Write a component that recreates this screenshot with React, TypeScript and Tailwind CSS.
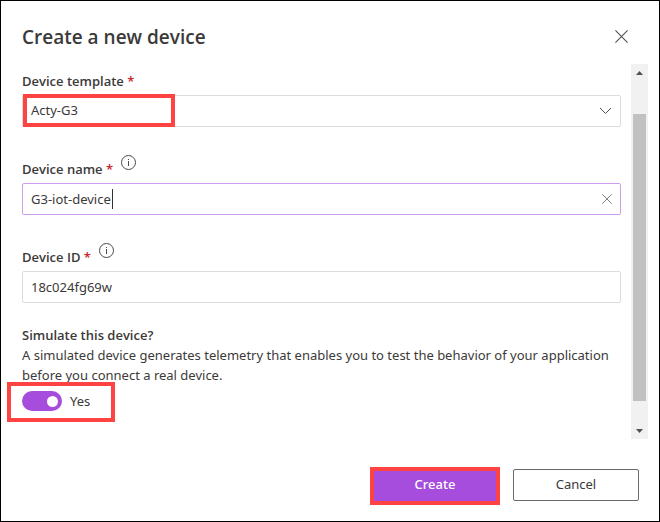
import React, { useState } from "react";

const fieldBox =
  "h-8 w-full rounded-xs border bg-white px-2 text-[13px] text-[#3b3a39] outline-none";

function InfoIcon() {
  return (
    <svg width="16" height="16" viewBox="0 0 16 16" fill="none" stroke="#4a4a4a" aria-hidden="true">
      <circle cx="7.5" cy="7.5" r="7" />
      <path d="M7.5 6V11M7.5 4V5" />
    </svg>
  );
}

function CrossIcon({ size, color }: { size: number; color: string }) {
  return (
    <svg width={size} height={size} viewBox="0 0 12 12" stroke={color} aria-hidden="true">
      <path d="M0.4 0.4L11.6 11.6M11.6 0.4L0.4 11.6" />
    </svg>
  );
}

function FieldLabel({ id, text, info }: { id: string; text: string; info?: boolean }) {
  return (
    <div className="flex h-7 gap-2">
      <label
        htmlFor={id}
        className="font-['Open_Sans','Noto_Sans',sans-serif] text-[13px] leading-7 font-semibold"
      >
        {text} <span className="text-[#c4262e]">*</span>
      </label>
      {info && (
        <button type="button" aria-label={"About " + text} className="h-4">
          <InfoIcon />
        </button>
      )}
    </div>
  );
}

function Scrollbar() {
  return (
    <div className="flex w-[17px] shrink-0 flex-col bg-[#f1f1f1]" aria-hidden="true">
      <div className="flex h-[17px] items-center justify-center">
        <svg width="7" height="4" viewBox="0 0 7 4" fill="#505050">
          <path d="M0 4L3.5 0L7 4Z" />
        </svg>
      </div>
      <div className="flex grow flex-col px-[2px] pt-[33px] pb-[21px]">
        <div className="grow bg-[#c1c1c1]" />
      </div>
      <div className="flex h-[17px] items-center justify-center">
        <svg width="7" height="4" viewBox="0 0 7 4" fill="#505050">
          <path d="M0 0L3.5 4L7 0Z" />
        </svg>
      </div>
    </div>
  );
}

export default function App() {
  const [name, setName] = useState("G3-iot-device");
  const [deviceId, setDeviceId] = useState("18c024fg69w");
  const [simulated, setSimulated] = useState(true);

  return (
    <main
      role="dialog"
      aria-labelledby="dialog-title"
      className="flex min-h-screen flex-col border border-black bg-white font-['Noto_Sans','Open_Sans',sans-serif] text-[#3b3a39]"
    >
      <header className="flex h-[63px] items-center justify-between pt-2 pr-[31px] pl-[21px]">
        <h1
          id="dialog-title"
          className="font-['Open_Sans','Noto_Sans',sans-serif] text-[19px] leading-7 font-semibold"
        >
          Create a new device
        </h1>
        <button type="button" aria-label="Close">
          <CrossIcon size={13} color="#505050" />
        </button>
      </header>

      <div className="flex grow pr-[11px]">
        <form className="min-w-0 grow pt-[3px] pr-[10px] pb-7 pl-[21px]">
          <div className="flex flex-col gap-7">
            <div>
              <FieldLabel id="template" text="Device template" />
              <div className="relative">
                <select id="template" className={fieldBox + " appearance-none border-[#dcdcdc]"}>
                  <option>Acty-G3</option>
                </select>
                <svg
                  className="pointer-events-none absolute top-3 right-[9px]"
                  width="13"
                  height="8"
                  viewBox="0 0 13 8"
                  fill="none"
                  stroke="#505050"
                  aria-hidden="true"
                >
                  <path d="M1 1L6.5 6.5L12 1" />
                </svg>
                <div className="pointer-events-none absolute -top-px left-px h-[33px] w-[152px] border-4 border-[#ff4343]" />
              </div>
            </div>

            <div>
              <FieldLabel id="name" text="Device name" info />
              <div className="relative">
                <input
                  id="name"
                  type="text"
                  value={name}
                  onChange={(e) => setName(e.target.value)}
                  className={fieldBox + " border-[#cf9df0]"}
                />
                <span className="pointer-events-none absolute top-[6px] left-[90px] h-5 w-px bg-[#323130]" />
                <button
                  type="button"
                  aria-label="Clear device name"
                  onClick={() => setName("")}
                  className="absolute top-[11px] right-[9px]"
                >
                  <CrossIcon size={10} color="#666666" />
                </button>
              </div>
            </div>

            <div>
              <FieldLabel id="device-id" text="Device ID" info />
              <input
                id="device-id"
                type="text"
                value={deviceId}
                onChange={(e) => setDeviceId(e.target.value)}
                className={fieldBox + " border-[#dcdcdc]"}
              />
            </div>
          </div>

          <div className="mt-[22px] text-[13px] leading-5">
            <label
              htmlFor="simulate"
              className="block font-['Open_Sans','Noto_Sans',sans-serif] font-semibold"
            >
              Simulate this device?
            </label>
            <p>
              A simulated device generates telemetry that enables you to test the behavior of your
              application before you connect a real device.
            </p>
            <div className="relative mt-[6px] flex w-fit items-center gap-2">
              <input
                id="simulate"
                type="checkbox"
                role="switch"
                checked={simulated}
                onChange={(e) => setSimulated(e.target.checked)}
                className="flex h-5 w-10 appearance-none items-center rounded-full bg-[#8a8886] px-1 before:size-[11px] before:rounded-full before:bg-white checked:justify-end checked:bg-[#a64ddd]"
              />
              <span>{simulated ? "Yes" : "No"}</span>
              <div className="pointer-events-none absolute -top-[9px] -left-[15px] h-10 w-[108px] border-4 border-[#ff4343]" />
            </div>
          </div>
        </form>
        <Scrollbar />
      </div>

      <footer className="flex justify-end gap-[15px] pt-[30px] pr-5 pb-5 text-[13px]">
        <div className="relative">
          <button type="button" className="h-8 w-[126px] bg-[#a64ddd] font-medium text-white">
            Create
          </button>
          <div className="pointer-events-none absolute -top-[2px] -left-[2px] h-[38px] w-[130px] border-4 border-[#ff4343]" />
        </div>
        <button type="button" className="h-8 w-[126px] rounded-xs border border-[#6a6a6a] bg-white">
          Cancel
        </button>
      </footer>
    </main>
  );
}
